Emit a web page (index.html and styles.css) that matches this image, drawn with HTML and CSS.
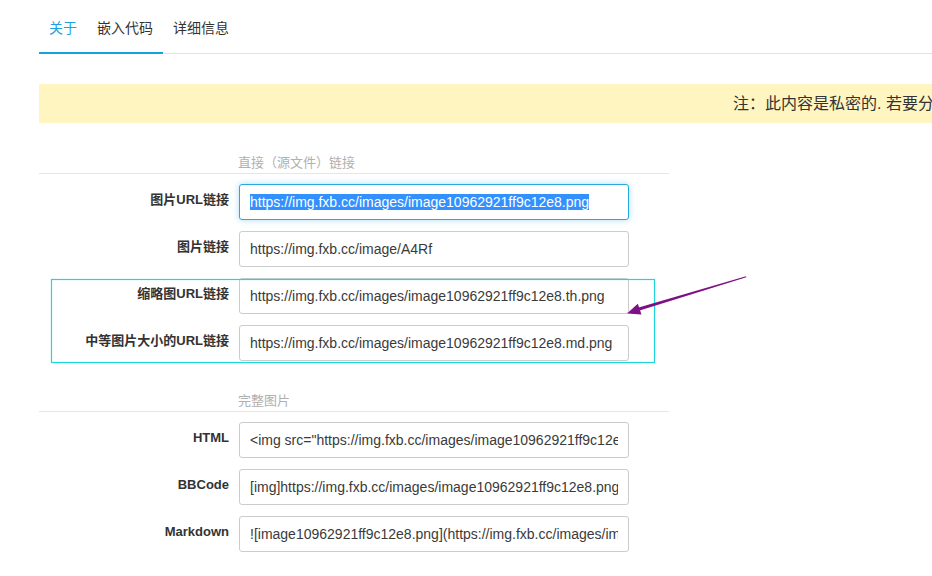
FILE: index.html
```html
<!DOCTYPE html>
<html lang="zh">
<head>
<meta charset="utf-8">
<title>图片信息</title>
<link rel="stylesheet" href="styles.css">
</head>
<body>
<div class="page">
  <div class="content">
    <nav class="tabs">
      <a class="tab active">关于</a>
      <a class="tab">嵌入代码</a>
      <a class="tab">详细信息</a>
    </nav>
    <div class="tab-track"><span class="track-active"></span><span class="track-rest"></span></div>

    <div class="notice">注：此内容是私密的. 若要分享</div>

    <section class="group">
      <div class="group-title"><span>直接（源文件）链接</span></div>
      <div class="row">
        <label class="lbl">图片URL链接</label>
        <div class="field focused"><div class="val"><span class="sel">https://img.fxb.cc/images/image10962921ff9c12e8.png</span></div></div>
      </div>
      <div class="row">
        <label class="lbl">图片链接</label>
        <div class="field"><div class="val">https://img.fxb.cc/image/A4Rf</div></div>
      </div>
      <div class="row">
        <label class="lbl">缩略图URL链接</label>
        <div class="field"><div class="val">https://img.fxb.cc/images/image10962921ff9c12e8.th.png</div></div>
      </div>
      <div class="row">
        <label class="lbl">中等图片大小的URL链接</label>
        <div class="field"><div class="val">https://img.fxb.cc/images/image10962921ff9c12e8.md.png</div></div>
      </div>
    </section>

    <section class="group">
      <div class="group-title"><span>完整图片</span></div>
      <div class="row">
        <label class="lbl">HTML</label>
        <div class="field"><div class="val">&lt;img src="https://img.fxb.cc/images/image10962921ff9c12e8.png" alt="image10962921ff9c12e8.png" border="0"&gt;</div></div>
      </div>
      <div class="row">
        <label class="lbl">BBCode</label>
        <div class="field"><div class="val">[img]https://img.fxb.cc/images/image10962921ff9c12e8.png[/img]</div></div>
      </div>
      <div class="row">
        <label class="lbl">Markdown</label>
        <div class="field"><div class="val">![image10962921ff9c12e8.png](https://img.fxb.cc/images/image10962921ff9c12e8.png)</div></div>
      </div>
    </section>
  </div>

  <svg class="annot" width="932" height="576" viewBox="0 0 932 576">
    <rect x="51.5" y="279.5" width="603" height="83" fill="none" stroke="#1ed6dd" stroke-width="1.2"/>
    <polygon points="746,276.3 746.3,277.2 639.6,310.6 638.7,307.5" fill="#7e0f86"/>
    <polygon points="627,313.5 641.5,314.6 637.8,303.8" fill="#7e0f86"/>
  </svg>
</div>
</body>
</html>
```

FILE: styles.css
```css
* { box-sizing: border-box; }

html, body {
  margin: 0;
  padding: 0;
  background: #ffffff;
  overflow: hidden;
}

body {
  font-family: "Liberation Sans", "Noto Sans CJK SC", sans-serif;
  color: #333333;
}

.page {
  position: relative;
  width: 932px;
  height: 576px;
}

.content {
  margin-left: 39px;
}

/* tabs */
.tabs {
  display: flex;
  padding-top: 18px;
}

.tab {
  padding: 0 10px;
  font-size: 14px;
  line-height: 20px;
  height: 34px;
  color: #333333;
  cursor: pointer;
}

.tab.active {
  color: #1aa3de;
}

.tab-track {
  display: flex;
  height: 2px;
}

.track-active {
  width: 124px;
  background: #12a5dd;
}

.track-rest {
  flex: 1;
  border-bottom: 1px solid #e2e2e2;
}

/* notice */
.notice {
  margin-top: 30px;
  height: 39px;
  background: #fff5c1;
  font-size: 16px;
  line-height: 39px;
  padding-left: 694px;
  white-space: nowrap;
  overflow: hidden;
  color: #333333;
}

/* groups */
.group {
  width: 630px;
  margin-top: 30px;
}

.group-title {
  padding-left: 199px;
  font-size: 13px;
  line-height: 20px;
  color: #b0b0b0;
  border-bottom: 1px solid #e6e6e6;
  margin-bottom: 10px;
}

.row {
  display: grid;
  grid-template-columns: 190px 390px;
  column-gap: 10px;
  margin-bottom: 11px;
}

.lbl {
  text-align: right;
  font-weight: bold;
  font-size: 13px;
  line-height: 18px;
  padding-top: 7px;
  color: #333333;
}

.field {
  height: 36px;
  border: 1px solid #cccccc;
  border-radius: 3px;
  padding: 0 10px;
  display: flex;
  align-items: center;
  background: #ffffff;
}

.field.focused {
  border-color: #27a9dd;
  box-shadow: 0 0 6px rgba(102, 190, 235, 0.55);
}

.val {
  flex: 1;
  overflow: hidden;
  white-space: nowrap;
  font-size: 14px;
  line-height: 18px;
  color: #3a3a3a;
}

.sel {
  background: #3390ff;
  color: #ffffff;
}

/* annotations */
.annot {
  position: absolute;
  left: 0;
  top: 0;
  pointer-events: none;
}
```
